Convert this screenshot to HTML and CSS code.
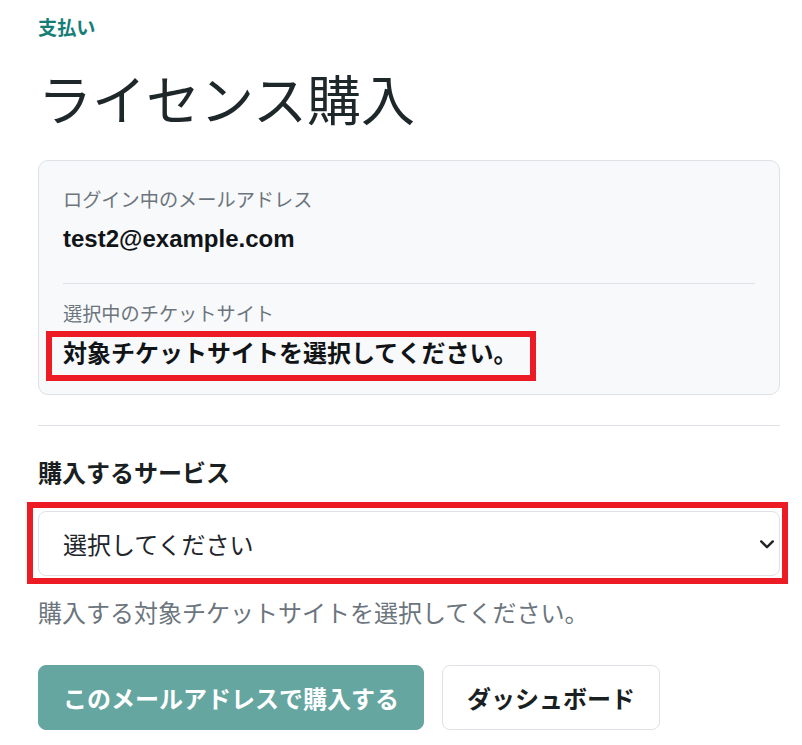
FILE: index.html
```html
<!DOCTYPE html>
<html lang="ja">
<head>
<meta charset="utf-8">
<title>ライセンス購入</title>
<link rel="stylesheet" href="styles.css">
</head>
<body>
<main class="page">
  <div class="eyebrow">支払い</div>
  <h1 class="title">ライセンス購入</h1>

  <section class="card">
    <div class="card-label card-label-first">ログイン中のメールアドレス</div>
    <div class="card-email">test2@example.com</div>
    <hr class="card-rule">
    <div class="card-label">選択中のチケットサイト</div>
    <div class="card-value">
      対象チケットサイトを選択してください。
      <span class="mark mark-value"></span>
    </div>
  </section>

  <hr class="section-rule">

  <div class="field-label">購入するサービス</div>
  <div class="select-wrap">
    <div class="select">
      <span class="select-text">選択してください</span>
      <svg class="chevron" width="14" height="9" viewBox="0 0 14 9" aria-hidden="true">
        <path d="M1.2 1.4 L7 7.2 L12.8 1.4" fill="none" stroke="#212529" stroke-width="2.4" stroke-linecap="round" stroke-linejoin="round"/>
      </svg>
    </div>
    <span class="mark mark-select"></span>
  </div>
  <div class="help">購入する対象チケットサイトを選択してください。</div>

  <div class="actions">
    <button class="btn btn-primary" type="button">このメールアドレスで購入する</button>
    <button class="btn btn-outline" type="button">ダッシュボード</button>
  </div>
</main>
</body>
</html>
```

FILE: styles.css
```css
* { box-sizing: border-box; }

body {
  margin: 0;
  background: #ffffff;
  color: #212529;
  font-family: "Noto Sans CJK JP", "Liberation Sans", sans-serif;
}

.page {
  width: 742px;
  margin-left: 38px;
  padding-top: 13px;
}

.eyebrow {
  font-size: 19.2px;
  line-height: 1.5;
  font-weight: 700;
  color: #177e77;
}

.title {
  margin: 24px 0 0;
  font-size: 54px;
  line-height: 1.2;
  font-weight: 400;
  color: #1e2729;
}

.card {
  margin-top: 29px;
  background: #f8f9fa;
  border: 1px solid #dee2e6;
  border-radius: 10px;
  padding: 24px 24px 24px;
}

.card-label {
  font-size: 19.2px;
  line-height: 1.5;
  color: #6c757d;
  margin-bottom: 6px;
}

.card-label-first {
  margin-bottom: 8px;
}

.card-email {
  font-family: "Liberation Sans", "Noto Sans CJK JP", sans-serif;
  font-size: 24px;
  line-height: 36px;
  font-weight: 700;
  color: #111417;
}

.card-rule {
  border: 0;
  border-top: 1px solid #dee2e6;
  margin: 26px 0 15px;
}

.card-value {
  position: relative;
  font-size: 24px;
  line-height: 36px;
  font-weight: 700;
  color: #111417;
}

.mark {
  position: absolute;
  border: 6px solid #ed1c24;
  pointer-events: none;
}

.mark-value {
  left: -17px;
  top: -3px;
  width: 490px;
  height: 50px;
}

.section-rule {
  border: 0;
  border-top: 1px solid #dee2e6;
  margin: 30px 0 0;
}

.field-label {
  margin-top: 28px;
  font-size: 24px;
  line-height: 36px;
  font-weight: 700;
  color: #1a1f22;
}

.select-wrap {
  position: relative;
  margin-top: 21px;
}

.select {
  height: 65px;
  border: 1px solid #dee2e6;
  border-radius: 8px;
  background: #ffffff;
  padding: 0 5px 0 24px;
  display: flex;
  align-items: center;
  justify-content: space-between;
}

.select-text {
  font-size: 24px;
  line-height: 36px;
  color: #212529;
}

.chevron {
  display: block;
  margin-top: 2px;
}

.mark-select {
  top: -9px;
  left: -11px;
  right: -8px;
  bottom: -8px;
}

.help {
  margin-top: 18px;
  font-size: 24px;
  line-height: 36px;
  color: #6c757d;
}

.actions {
  margin-top: 35px;
  display: flex;
  gap: 18px;
}

.btn {
  height: 65px;
  padding: 0 24px;
  border-radius: 8px;
  font-family: "Noto Sans CJK JP", sans-serif;
  font-size: 24px;
  line-height: 36px;
  font-weight: 700;
  white-space: nowrap;
  cursor: pointer;
}

.btn-primary {
  background: #65a6a1;
  border: 1px solid #65a6a1;
  color: #ffffff;
}

.btn-outline {
  background: #ffffff;
  border: 1px solid #dee2e6;
  color: #1a1f22;
}
```
